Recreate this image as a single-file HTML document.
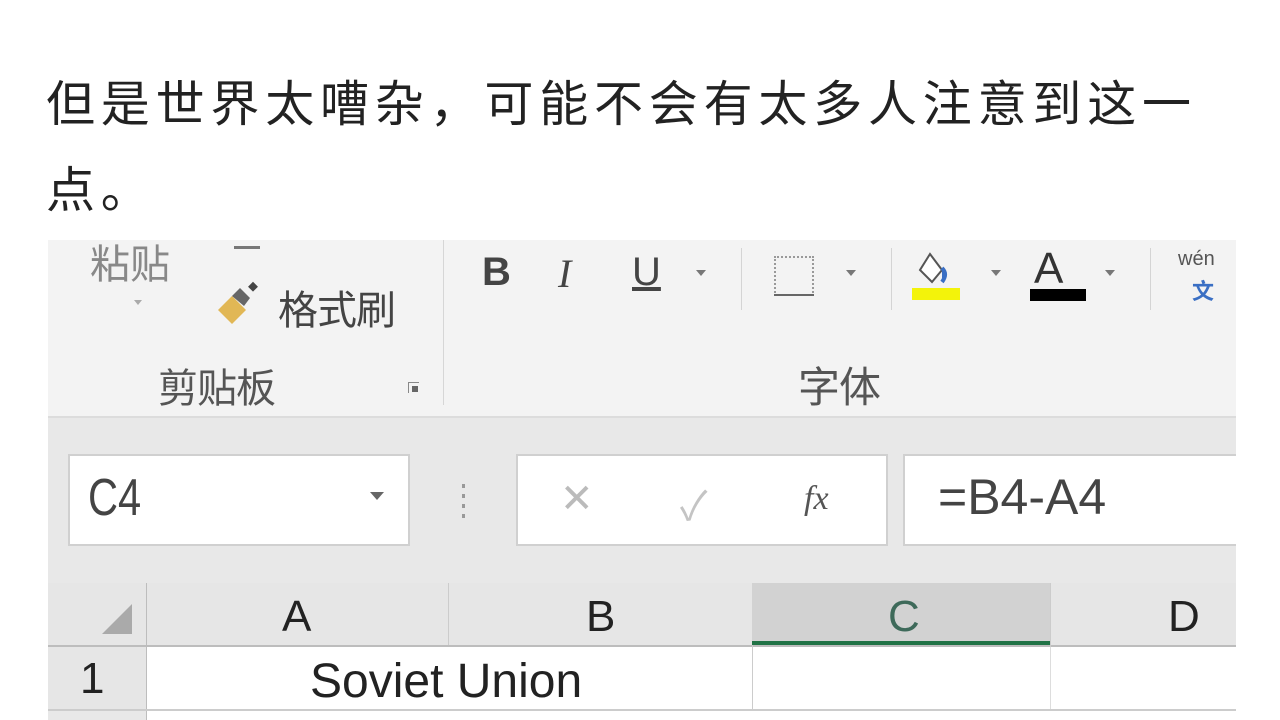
<!DOCTYPE html>
<html><head><meta charset="utf-8"><style>
body{margin:0;width:1280px;height:720px;background:#fff;overflow:hidden;position:relative;font-family:"Liberation Sans","Noto Sans CJK SC",sans-serif}
.t{position:absolute;left:46px;top:62px;font-size:49px;letter-spacing:5.8px;line-height:86px;color:#222;font-family:"Liberation Sans","Noto Sans CJK SC",sans-serif}
.a{position:absolute;white-space:nowrap}
.g{color:#555;font-family:"Liberation Sans","Noto Sans CJK SC",sans-serif}
</style></head><body>
<div class="t">但是世界太嘈杂，可能不会有太多人注意到这一<br>点。</div>
<div class="a" style="left:48px;top:240px;width:1188px;height:480px;background:#e8e8e8;overflow:hidden">
 <div class="a" style="left:0;top:0;width:1188px;height:176px;background:#f3f3f3;border-bottom:2px solid #dcdcdc"></div>
 <div class="a" style="left:395px;top:0;width:1px;height:165px;background:#d6d6d6"></div>
 <div class="a g" style="left:42px;top:-8px;font-size:40px;color:#888">粘贴</div>
 <div class="a" style="left:186px;top:6px;width:26px;height:3px;background:#777"></div>
 <div class="a" style="left:86px;top:60px;width:0;height:0;border-left:4px solid transparent;border-right:4px solid transparent;border-top:5px solid #aaa"></div>
 <svg class="a" style="left:168px;top:38px" width="50" height="50"><polygon points="2,32 16,18 30,32 16,46" fill="#e1b755"/><polygon points="16,18 24,10 34,20 28,28" fill="#666"/><rect x="34" y="5" width="7" height="7" fill="#444" transform="rotate(45 37 8)"/></svg>
 <div class="a g" style="left:230px;top:38px;font-size:40px;color:#444;letter-spacing:-1px">格式刷</div>
 <div class="a g" style="left:110px;top:116px;font-size:40px;color:#555;letter-spacing:-1px">剪贴板</div>
 <div class="a" style="left:360px;top:142px;width:10px;height:10px;border:1px solid #888;border-right:none;border-bottom:none"></div>
 <div class="a" style="left:364px;top:146px;width:6px;height:6px;background:#666"></div>
 <div class="a" style="left:434px;top:10px;font-size:40px;font-weight:bold;color:#444">B</div>
 <div class="a" style="left:510px;top:10px;font-size:40px;font-style:italic;font-family:'Liberation Serif',serif;color:#444">I</div>
 <div class="a" style="left:584px;top:10px;font-size:40px;color:#444;text-decoration:underline">U</div>
 <div class="a" style="left:648px;top:30px;border-left:5px solid transparent;border-right:5px solid transparent;border-top:6px solid #777"></div>
 <div class="a" style="left:693px;top:8px;width:1px;height:62px;background:#d4d4d4"></div>
 <div class="a" style="left:726px;top:16px;width:40px;height:40px;border:2px dotted #999;box-sizing:border-box"></div>
 <div class="a" style="left:726px;top:54px;width:40px;height:2px;background:#666"></div>
 <div class="a" style="left:798px;top:30px;border-left:5px solid transparent;border-right:5px solid transparent;border-top:6px solid #777"></div>
 <div class="a" style="left:843px;top:8px;width:1px;height:62px;background:#d4d4d4"></div>
 <svg class="a" style="left:864px;top:8px" width="60" height="50"><path d="M18 6 L30 22 L20 34 L8 22 Z" fill="#fff" stroke="#555" stroke-width="2"/><path d="M30 20 q6 6 0 14" fill="#3a6fc4" stroke="#3a6fc4" stroke-width="4"/></svg>
 <div class="a" style="left:864px;top:48px;width:48px;height:12px;background:#f3f30a"></div>
 <div class="a" style="left:943px;top:30px;border-left:5px solid transparent;border-right:5px solid transparent;border-top:6px solid #777"></div>
 <div class="a" style="left:986px;top:4px;font-size:44px;color:#333">A</div>
 <div class="a" style="left:982px;top:49px;width:56px;height:12px;background:#000"></div>
 <div class="a" style="left:1057px;top:30px;border-left:5px solid transparent;border-right:5px solid transparent;border-top:6px solid #777"></div>
 <div class="a" style="left:1102px;top:8px;width:1px;height:62px;background:#d4d4d4"></div>
 <div class="a" style="left:1130px;top:8px;font-size:20px;color:#555">wén</div>
 <div class="a" style="left:1144px;top:34px;font-size:22px;color:#3a6fc4;font-family:'Noto Sans CJK SC',sans-serif;font-weight:bold">文</div>
 <div class="a g" style="left:750px;top:114px;font-size:42px;color:#555;letter-spacing:-1px">字体</div>
 <div class="a" style="left:20px;top:214px;width:342px;height:92px;background:#fff;border:2px solid #d0d0d0;box-sizing:border-box"></div>
 <div class="a" style="left:40px;top:228px;font-size:52px;color:#444;transform:scaleX(0.8);transform-origin:left">C4</div>
 <div class="a" style="left:322px;top:252px;border-left:7px solid transparent;border-right:7px solid transparent;border-top:8px solid #666"></div>
 <div class="a" style="left:414px;top:244px;width:3px;height:34px;background:repeating-linear-gradient(#999 0 4px,transparent 4px 10px)"></div>
 <div class="a" style="left:468px;top:214px;width:372px;height:92px;background:#fff;border:2px solid #d0d0d0;box-sizing:border-box"></div>
 <div class="a" style="left:512px;top:236px;font-size:40px;color:#bbb">✕</div>
 <div class="a" style="left:632px;top:234px;font-size:40px;color:#c4c4c4">✓</div>
 <div class="a" style="left:756px;top:240px;font-size:34px;font-style:italic;font-family:'Liberation Serif',serif;color:#555">fx</div>
 <div class="a" style="left:855px;top:214px;width:340px;height:92px;background:#fff;border:2px solid #d0d0d0;box-sizing:border-box"></div>
 <div class="a" style="left:890px;top:228px;font-size:50px;color:#444">=B4-A4</div>
 <div class="a" style="left:0;top:343px;width:1188px;height:62px;background:#e6e6e6;border-bottom:2px solid #bdbdbd"></div>
 <div class="a" style="left:98px;top:343px;width:1px;height:140px;background:#bdbdbd"></div>
 <div class="a" style="left:400px;top:343px;width:1px;height:62px;background:#ccc"></div>
 <div class="a" style="left:400px;top:471px;width:1px;height:20px;background:#ccc"></div>
 <div class="a" style="left:704px;top:343px;width:298px;height:62px;background:#d2d2d2;border-bottom:4px solid #217346;box-sizing:border-box"></div>
 <div class="a" style="left:704px;top:405px;width:1px;height:80px;background:#ccc"></div>
 <div class="a" style="left:1002px;top:343px;width:1px;height:140px;background:#ccc"></div>
 <svg class="a" style="left:52px;top:362px" width="34" height="34"><polygon points="32,2 32,32 2,32" fill="#aaa"/></svg>
 <div class="a" style="left:234px;top:352px;font-size:44px;color:#222">A</div>
 <div class="a" style="left:538px;top:352px;font-size:44px;color:#222">B</div>
 <div class="a" style="left:840px;top:352px;font-size:44px;color:#3e6a5a">C</div>
 <div class="a" style="left:1120px;top:352px;font-size:44px;color:#222">D</div>
 <div class="a" style="left:0;top:407px;width:98px;height:62px;background:#e6e6e6"></div>
 <div class="a" style="left:99px;top:407px;width:1089px;height:62px;background:#fff"></div>
 <div class="a" style="left:704px;top:407px;width:1px;height:62px;background:#ccc"></div>
 <div class="a" style="left:1002px;top:407px;width:1px;height:62px;background:#ddd"></div>
 <div class="a" style="left:32px;top:414px;font-size:44px;color:#222">1</div>
 <div class="a" style="left:262px;top:414px;font-size:48px;color:#222">Soviet Union</div>
 <div class="a" style="left:0;top:469px;width:1188px;height:2px;background:#ccc"></div>
 <div class="a" style="left:99px;top:471px;width:1089px;height:10px;background:#fff"></div>
</div>
</body></html>
